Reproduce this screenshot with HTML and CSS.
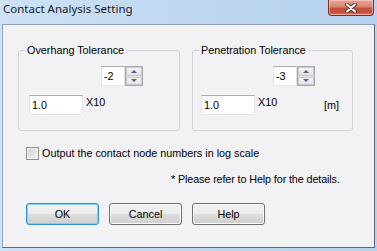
FILE: index.html
```html
<!DOCTYPE html>
<html lang="en">
<head>
    <meta charset="UTF-8">
    <meta name="viewport" content="width=device-width, initial-scale=1.0">
    <title>Contact Analysis Setting</title>
    <link rel="stylesheet" href="styles.css">
</head>
<body>
    <div class="window">
        <div class="titlebar">
            <span class="title">Contact Analysis Setting</span>
            <button type="button" class="close">
                <svg width="14" height="10" viewBox="0 0 14 10">
                    <path d="M3 1.5 L11 8.5 M11 1.5 L3 8.5" stroke="#4a2a24" stroke-width="4" stroke-linecap="round"/>
                    <path d="M3 1.5 L11 8.5 M11 1.5 L3 8.5" stroke="#ffffff" stroke-width="2.2" stroke-linecap="round"/>
                </svg>
            </button>
        </div>

        <div class="client">
            <div class="groups">
                <fieldset class="group group-left">
                    <legend>Overhang Tolerance</legend>
                    <div class="spin spin-left">
                        <div class="spin-text">-2</div>
                        <div class="spin-btns">
                            <span class="spin-up"></span>
                            <span class="spin-down"></span>
                        </div>
                    </div>
                    <div class="value-row value-left">
                        <div class="textbox">1.0</div>
                        <span class="exp">X10</span>
                    </div>
                </fieldset>

                <fieldset class="group group-right">
                    <legend>Penetration Tolerance</legend>
                    <div class="spin spin-right">
                        <div class="spin-text">-3</div>
                        <div class="spin-btns">
                            <span class="spin-up"></span>
                            <span class="spin-down"></span>
                        </div>
                    </div>
                    <div class="value-row value-right">
                        <div class="textbox">1.0</div>
                        <span class="exp">X10</span>
                        <span class="unit">[m]</span>
                    </div>
                </fieldset>
            </div>

            <label class="check">
                <span class="box"></span>
                Output the contact node numbers in log scale
            </label>

            <p class="note">* Please refer to Help for the details.</p>

            <div class="buttons">
                <button type="button" class="btn btn-default">OK</button>
                <button type="button" class="btn">Cancel</button>
                <button type="button" class="btn">Help</button>
            </div>
        </div>
    </div>
</body>
</html>
```

FILE: styles.css
```css
body {
        margin: 0;
        width: 377px;
        height: 251px;
        overflow: hidden;
        font-family: "Liberation Sans", Arial, sans-serif;
        font-size: 10.8px;
        color: #000000;
}

.window {
        height: 251px;
        box-sizing: border-box;
        padding: 0 2px 3px 2px;
        display: flex;
        flex-direction: column;
        background: linear-gradient(90deg, #cde2f6 0%, #bcd6ef 60%, #b6d2ee 100%);
}

.titlebar {
        height: 24px;
        display: flex;
        justify-content: space-between;
        align-items: flex-start;
        padding-left: 1px;
}

.title {
        font-family: "Noto Sans", "Open Sans", sans-serif;
        font-size: 11.5px;
        line-height: 16px;
        padding-top: 1px;
        color: #1a1a1a;
}

.close {
        width: 46px;
        height: 16px;
        margin-right: 1px;
        padding: 0;
        border: 1px solid #7a2e24;
        border-top: none;
        border-radius: 0 0 4px 4px;
        background: linear-gradient(#e6a596 0%, #d98473 45%, #c5513d 55%, #c84f3a 85%, #e08a72 100%);
        box-shadow: inset 0 0 0 1px rgba(255, 220, 210, 0.5);
        display: flex;
        align-items: center;
        justify-content: center;
}

.client {
        flex: 1;
        border: 1px solid;
        border-color: #8fa1b8 #5a6779 #5a6779 #8fa1b8;
        background-color: #f2f1f4;
        display: flex;
        flex-direction: column;
}

.groups {
        display: flex;
        gap: 12px;
        margin-top: 19px;
        padding-left: 15px;
}

.group {
        margin: 0;
        padding: 0;
        min-width: 0;
        height: 87px;
        box-sizing: border-box;
        border: 1px solid #d3d3da;
        border-radius: 3px;
}

.group-left {
        width: 162px;
}

.group-right {
        width: 161px;
}

legend {
        margin-left: 6px;
        padding: 0 2px;
        line-height: 13px;
}

.spin {
        display: flex;
        width: 42px;
        height: 20px;
        margin-top: 9px;
}

.spin-left {
        margin-left: 82px;
}

.spin-right {
        margin-left: 80px;
}

.spin-text {
        width: 24px;
        box-sizing: border-box;
        border: 1px solid;
        border-color: #abadb3 #e2e3ea #e3e9ef #e2e3ea;
        background-color: #ffffff;
        padding-left: 2px;
        line-height: 18px;
}

.spin-btns {
        width: 18px;
        box-sizing: border-box;
        border: 1px solid #a9a9ad;
        display: flex;
        flex-direction: column;
        gap: 1px;
        background-color: #e6e6e8;
}

.spin-up,
.spin-down {
        flex: 1;
        border: 1px solid #c9cacc;
        background: linear-gradient(#f6f6f6, #e2e2e4);
        display: flex;
        align-items: center;
        justify-content: center;
}

.spin-up::before {
        content: "";
        border-left: 3px solid transparent;
        border-right: 3px solid transparent;
        border-bottom: 3px solid #4b5f96;
}

.spin-down::before {
        content: "";
        border-left: 3px solid transparent;
        border-right: 3px solid transparent;
        border-top: 3px solid #4b5f96;
}

.value-row {
        display: flex;
        align-items: flex-start;
        margin-top: 9px;
}

.value-left {
        margin-left: 10px;
}

.value-right {
        margin-left: 8px;
}

.textbox {
        width: 54px;
        height: 20px;
        box-sizing: border-box;
        border: 1px solid;
        border-color: #abadb3 #e2e3ea #e3e9ef #e2e3ea;
        background-color: #ffffff;
        padding-left: 2px;
        line-height: 18px;
}

.exp {
        margin-left: 3px;
        margin-top: 1px;
        line-height: 13px;
}

.unit {
        margin-left: auto;
        margin-right: 13px;
        margin-top: 4px;
        line-height: 13px;
}

.check {
        display: flex;
        align-items: center;
        gap: 3px;
        margin: 16px 0 0 23px;
        line-height: 13px;
}

.box {
        width: 13px;
        height: 13px;
        box-sizing: border-box;
        border: 1px solid #8e8f8f;
        background: linear-gradient(135deg, #cfd0d2, #f6f6f6);
        box-shadow: inset 0 0 0 1px #f4f4f4;
}

.note {
        margin: 13px 0 0 168px;
        line-height: 13px;
        letter-spacing: -0.12px;
}

.buttons {
        display: flex;
        gap: 10px;
        margin: 17px 0 0 23px;
}

.btn {
        width: 73px;
        height: 22px;
        padding: 0;
        font: inherit;
        color: #000000;
        border: 1px solid #707070;
        border-radius: 3px;
        background: linear-gradient(#f2f2f2 0%, #ebebeb 50%, #dddddd 50%, #cfcfcf 100%);
        box-shadow: inset 0 0 0 1px #fbfbfb;
}

.btn-default {
        border-color: #2a93d2;
        box-shadow: inset 0 0 0 1px #76d3f6;
}
```
